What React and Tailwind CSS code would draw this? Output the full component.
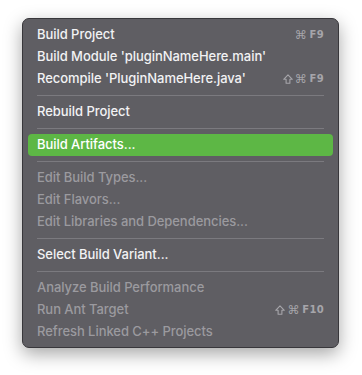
const items = [
  { label: "Build Project", shortcut: ["", "⌘", "F9"] },
  { label: "Build Module 'pluginNameHere.main'" },
  { label: "Recompile 'PluginNameHere.java'", shortcut: ["⇧", "⌘", "F9"] },
  { sep: true },
  { label: "Rebuild Project" },
  { sep: true },
  { label: "Build Artifacts...", active: true },
  { sep: true },
  { label: "Edit Build Types...", disabled: true },
  { label: "Edit Flavors...", disabled: true },
  { label: "Edit Libraries and Dependencies...", disabled: true },
  { sep: true },
  { label: "Select Build Variant..." },
  { sep: true },
  { label: "Analyze Build Performance", disabled: true },
  { label: "Run Ant Target", disabled: true, shortcut: ["⇧", "⌘", "F10"] },
  { label: "Refresh Linked C++ Projects", disabled: true },
];

function ShiftIcon() {
  return (
    <svg width="10" height="10" viewBox="0 0 10 10" className="mr-[2px]">
      <path d="M5 0.8 L9.3 5.3 H6.9 V9.3 H3.1 V5.3 H0.7 Z" fill="none" stroke="currentColor" strokeWidth="1.1" strokeLinejoin="round" />
    </svg>
  );
}

function Shortcut({ keys }) {
  const [shift, cmd, key] = keys;
  return (
    <span className="ml-auto flex items-center text-[#a6a5aa] font-['DejaVu_Sans',sans-serif]">
      {shift && <ShiftIcon />}
      <span className="text-[12px] leading-none mr-[3px]">{cmd}</span>
      <span className="text-[10px] leading-none font-bold tracking-[0.3px]">{key}</span>
    </span>
  );
}

export default function App() {
  return (
    <div className="w-[362px] h-[375px] bg-white pt-[18px] pl-[22px]">
      <div className="w-[317px] h-[330px] rounded-[7px] bg-[#5f5e63] border border-[#38373b] shadow-[0_6px_18px_rgba(0,0,0,0.35)] pt-[5px] pb-[5px] px-[5px] font-['Inter',sans-serif]">
        {items.map((it, i) =>
          it.sep ? (
            <div key={i} className="h-[11px] flex items-center px-[9px]">
              <div className="h-px w-full bg-[#7b7a7f]" />
            </div>
          ) : (
            <div
              key={i}
              className={`h-[22px] flex items-center pl-[9px] pr-[9px] rounded-[4px] text-[13px] font-medium tracking-[-0.05px] ${
                it.active ? "bg-[#5db745] text-white" : it.disabled ? "text-[#9b9a9f]" : "text-[#f2f2f4]"
              }`}
            >
              <span>{it.label}</span>
              {it.shortcut && <Shortcut keys={it.shortcut} />}
            </div>
          )
        )}
      </div>
    </div>
  );
}
